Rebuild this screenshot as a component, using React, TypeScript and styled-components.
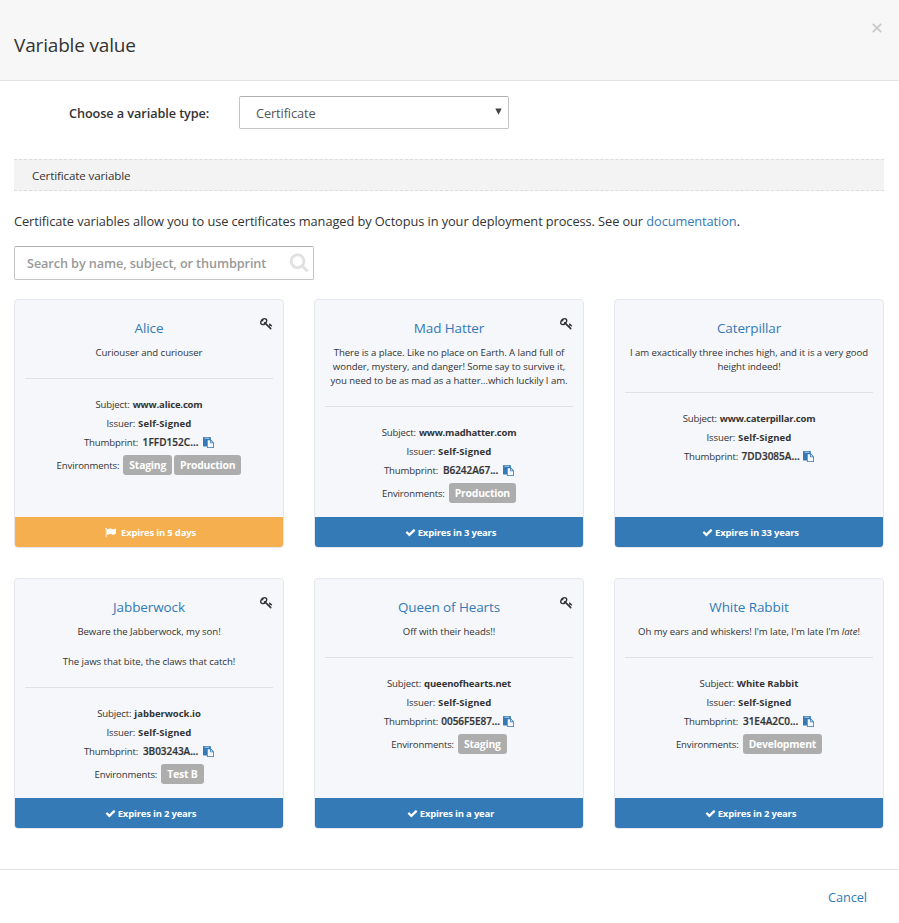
import React from "react";
import styled, { createGlobalStyle } from "styled-components";

const GlobalStyle = createGlobalStyle`
  * { box-sizing: border-box; }
  body {
    margin: 0;
    background: #fff;
    color: #333;
    font-family: "Open Sans", "Noto Sans", sans-serif;
    font-size: 12.8px;
  }
`;

const Dialog = styled.div`
  width: 899px;
  height: 923px;
  display: flex;
  flex-direction: column;
  overflow: hidden;
`;

const Header = styled.header`
  height: 81px;
  padding: 0 16px 0 14px;
  display: flex;
  justify-content: space-between;
  background: #f7f7f7;
  border-bottom: 1px solid #e2e2e2;
`;

const Heading = styled.h1`
  margin: 31px 0 0;
  font-size: 19px;
  font-weight: 400;
  line-height: 28px;
  letter-spacing: -0.17px;
`;

const CloseButton = styled.button`
  width: 12px;
  height: 12px;
  margin-top: 22px;
  padding: 0;
  border: 0;
  background: none;
  display: flex;
  align-items: center;
  justify-content: center;
`;

const Body = styled.main`
  flex: 1;
  padding: 15px 15px 0 14px;
`;

const FormRow = styled.div`
  display: flex;
  align-items: center;
  height: 33px;
`;

const Label = styled.label`
  width: 225px;
  padding: 1px 0 0 55px;
  font-weight: 600;
  font-size: 12.7px;
  letter-spacing: -0.08px;
`;

const Select = styled.button`
  width: 270px;
  height: 33px;
  padding: 0 6px 0 16px;
  display: flex;
  align-items: center;
  justify-content: space-between;
  border: 1px solid #c4c4c4;
  border-top-color: #b0b0b0;
  border-radius: 2px;
  background: #fff;
  color: #555;
  font: inherit;
  letter-spacing: -0.12px;
`;

const Caret = styled.svg`
  width: 7px;
  height: 7px;
  margin-top: -3px;
`;

const Banner = styled.div`
  height: 32px;
  margin-top: 30px;
  padding-left: 18px;
  border: dashed #dcdcdc;
  border-width: 1px 0;
  background: #f3f3f3;
  font-size: 11.6px;
  line-height: 32px;
  letter-spacing: -0.13px;
`;

const Intro = styled.p`
  margin: 20px 0 0;
  line-height: 20px;
  letter-spacing: -0.08px;
  white-space: nowrap;
`;

const Link = styled.a`
  color: #337ab7;
  text-decoration: none;
`;

const SearchBox = styled.div`
  width: 300px;
  height: 34px;
  margin-top: 15px;
  padding: 0 4px 2px 12px;
  display: flex;
  align-items: center;
  justify-content: space-between;
  border: 1px solid #c4c4c4;
  border-top-color: #b0b0b0;
  border-radius: 2px;
`;

const SearchInput = styled.input`
  flex: 1;
  min-width: 0;
  padding: 1px 0 0;
  border: 0;
  outline: 0;
  font: 600 12.7px "Open Sans", sans-serif;
  letter-spacing: -0.1px;
  &::placeholder { color: #999; opacity: 1; }
`;

const Icon = styled.svg<{ $size: number; $color?: string }>`
  width: ${(p) => p.$size}px;
  height: ${(p) => p.$size}px;
  fill: ${(p) => p.$color ?? "currentColor"};
  flex: none;
  display: block;
`;

const CardGrid = styled.section`
  margin-top: 19px;
  display: grid;
  grid-template-columns: repeat(3, 270px);
  grid-template-rows: 249px 251px;
  gap: 30px;
`;

const CardShell = styled.article`
  position: relative;
  display: flex;
  flex-direction: column;
  overflow: hidden;
  border: 1px solid #e4e8ee;
  border-radius: 4px;
  background: #f5f7fb;
  text-align: center;
  font-size: 9.6px;
`;

const CardMain = styled.div`
  flex: 1;
  padding: 17px 10px 0;
`;

const KeyBadge = styled.span`
  position: absolute;
  top: 17px;
  right: 10px;
`;

const CardTitle = styled.h2`
  margin: 0 0 7px;
  color: #337ab7;
  font-size: 13.5px;
  font-weight: 400;
  line-height: 22px;
  letter-spacing: -0.11px;
`;

const Description = styled.div`
  padding-bottom: 18px;
  border-bottom: 1px solid #dfe1e4;
  line-height: 14px;
  letter-spacing: -0.06px;
  white-space: nowrap;
`;

const Paragraph = styled.p`
  margin: 0;
  & + & { margin-top: 16px; }
`;

const Details = styled.div`
  padding-top: 16px;
`;

const DetailRow = styled.div`
  height: 19px;
  display: flex;
  align-items: center;
  justify-content: center;
`;

const EnvironmentRow = styled(DetailRow)`
  height: 20px;
  margin-top: 3px;
  gap: 2px;
`;

const DetailLabel = styled.span<{ $gap?: number }>`
  margin-right: ${(p) => p.$gap ?? 3}px;
  letter-spacing: -0.15px;
`;

const Value = styled.strong<{ $ls: number }>`
  font-size: 9.5px;
  font-weight: 700;
  letter-spacing: ${(p) => p.$ls}px;
`;

const Thumbprint = styled(Value)`
  width: 61px;
  margin: -2px 2px 0 2px;
  font-size: 10px;
  font-weight: 600;
  white-space: nowrap;
  -webkit-text-stroke: 0.2px currentColor;
`;

const Tag = styled.span`
  height: 20px;
  padding: 0 6px;
  border-radius: 3px;
  background: #adadad;
  color: #fff;
  font-size: 10.4px;
  font-weight: 700;
  line-height: 20px;
  letter-spacing: -0.21px;
`;

const Expiry = styled.footer<{ $warning?: boolean }>`
  height: 30px;
  padding-left: 3px;
  display: flex;
  align-items: center;
  justify-content: center;
  gap: ${(p) => (p.$warning ? 5 : 2)}px;
  background: ${(p) => (p.$warning ? "#f5af4e" : "#337ab7")};
  color: #fff;
  font-size: 9.5px;
  font-weight: 700;
  letter-spacing: -0.2px;
`;

const Footer = styled.footer`
  height: 54px;
  padding: 0 32px 0 0;
  display: flex;
  align-items: center;
  justify-content: flex-end;
  border-top: 1px solid #e2e2e2;
  letter-spacing: -0.1px;
`;

const paths = {
  search:
    "M1216 832q0-185-131.500-316.500t-316.500-131.500-316.500 131.500-131.500 316.500 131.500 316.500 316.500 131.500 316.500-131.500 131.500-316.500zm512 832q0 52-38 90t-90 38q-54 0-90-38l-343-342q-179 124-399 124-143 0-273.500-55.500t-225-150-150-225-55.500-273.500 55.500-273.500 150-225 225-150 273.500-55.500 273.500 55.500 225 150 150 225 55.500 273.500q0 220-124 399l343 343q37 37 37 90z",
  key: "M832 512q0-80-56-136t-136-56-136 56-56 136q0 42 19 83-41-19-83-19-80 0-136 56t-56 136 56 136 136 56 136-56 56-136q0-42-19-83 41 19 83 19 80 0 136-56t56-136zm851 704q0 17-49 66t-66 49q-9 0-28.500-16t-36.500-33-38.500-40-24.500-26l-96 96 220 220q28 28 28 68 0 42-39 81t-81 39q-40 0-68-28l-671-671q-176 131-365 131-163 0-265.500-102.500t-102.500-265.500q0-160 95-313t248-248 313-95q163 0 265.500 102.500t102.500 265.500q0 189-131 365l355 355 96-96q-3-3-26-24.500t-40-38.500-33-36.500-16-28.500q0-17 49-66t66-49q13 0 23 10 6 6 46 44.500t82 79.500 86.500 86 73 78 28.500 41z",
  paste:
    "M768 1664h896v-640h-416q-40 0-68-28t-28-68v-416h-384v1152zm256-1440v-64q0-13-9.500-22.500t-22.500-9.500h-704q-13 0-22.500 9.500t-9.500 22.500v64q0 13 9.500 22.500t22.500 9.500h704q13 0 22.500-9.500t9.500-22.500zm256 672h299l-299-299v299zm512 128v672q0 40-28 68t-68 28h-960q-40 0-68-28t-28-68v-160h-544q-40 0-68-28t-28-68v-1344q0-40 28-68t68-28h1088q40 0 68 28t28 68v328q21 13 36 28l408 408q28 28 48 76t20 88z",
  check:
    "M1671 566q0 40-28 68l-724 724-136 136q-28 28-68 28t-68-28l-136-136-362-362q-28-28-28-68t28-68l136-136q28-28 68-28t68 28l294 295 656-657q28-28 68-28t68 28l136 136q28 28 28 68z",
  flag: "M320 256q0 72-64 110v1266q0 13-9.500 22.500t-22.500 9.500h-64q-13 0-22.500-9.500t-9.500-22.500v-1266q-64-38-64-110 0-53 37.500-90.500t90.500-37.500 90.500 37.500 37.500 90.500zm1472 64v763q0 25-12.500 38.500t-39.500 27.500q-215 116-369 116-61 0-123.500-22t-108.500-48-115.500-48-142.500-22q-192 0-464 146-17 9-33 9-26 0-45-19t-19-45v-742q0-32 31-55 21-14 79-43 236-120 421-120 107 0 200 29t219 88q38 19 88 19 54 0 117.500-21t110-47 88-47 54.500-21q26 0 45 19t19 45z",
};

function Glyph({ name, size, color }: { name: keyof typeof paths; size: number; color?: string }) {
  return (
    <Icon $size={size} $color={color} viewBox="0 0 1792 1792">
      <path d={paths[name]} />
    </Icon>
  );
}

type Certificate = {
  name: string;
  hasKey?: boolean;
  description: React.ReactNode;
  subject: string;
  subjectSpacing: number;
  thumbprint: string;
  thumbSpacing: number;
  environments: string[];
  expires: string;
  warning?: boolean;
};

const certificates: Certificate[] = [
  {
    name: "Alice", hasKey: true,
    description: <Paragraph>Curiouser and curiouser</Paragraph>,
    subject: "www.alice.com", subjectSpacing: -0.16,
    thumbprint: "1FFD152C...", thumbSpacing: 0.05,
    environments: ["Staging", "Production"], expires: "Expires in 5 days", warning: true,
  },
  {
    name: "Mad Hatter", hasKey: true,
    description: (
      <Paragraph>
        There is a place. Like no place on Earth. A land full of<br />
        wonder, mystery, and danger! Some say to survive it,<br />
        you need to be as mad as a hatter...which luckily I am.
      </Paragraph>
    ),
    subject: "www.madhatter.com", subjectSpacing: -0.22,
    thumbprint: "B6242A67...", thumbSpacing: -0.03,
    environments: ["Production"], expires: "Expires in 3 years",
  },
  {
    name: "Caterpillar",
    description: (
      <Paragraph>
        I am exactically three inches high, and it is a very good<br />height indeed!
      </Paragraph>
    ),
    subject: "www.caterpillar.com", subjectSpacing: -0.2,
    thumbprint: "7DD3085A...", thumbSpacing: 0,
    environments: [], expires: "Expires in 33 years",
  },
  {
    name: "Jabberwock", hasKey: true,
    description: (
      <>
        <Paragraph>Beware the Jabberwock, my son!</Paragraph>
        <Paragraph>The jaws that bite, the claws that catch!</Paragraph>
      </>
    ),
    subject: "jabberwock.io", subjectSpacing: -0.03,
    thumbprint: "3B03243A...", thumbSpacing: -0.03,
    environments: ["Test B"], expires: "Expires in 2 years",
  },
  {
    name: "Queen of Hearts", hasKey: true,
    description: <Paragraph>Off with their heads!!</Paragraph>,
    subject: "queenofhearts.net", subjectSpacing: -0.1,
    thumbprint: "0056F5E87...", thumbSpacing: -0.05,
    environments: ["Staging"], expires: "Expires in a year",
  },
  {
    name: "White Rabbit",
    description: <Paragraph>Oh my ears and whiskers! I'm late, I'm late I'm <em>late</em>!</Paragraph>,
    subject: "White Rabbit", subjectSpacing: 0,
    thumbprint: "31E4A2C0...", thumbSpacing: 0,
    environments: ["Development"], expires: "Expires in 2 years",
  },
];

function CertificateCard({ cert }: { cert: Certificate }) {
  return (
    <CardShell>
      {cert.hasKey && (
        <KeyBadge><Glyph name="key" size={13} color="#333" /></KeyBadge>
      )}
      <CardMain>
        <CardTitle>{cert.name}</CardTitle>
        <Description>{cert.description}</Description>
        <Details>
          <DetailRow>
            <DetailLabel>Subject:</DetailLabel>
            <Value $ls={cert.subjectSpacing}>{cert.subject}</Value>
          </DetailRow>
          <DetailRow>
            <DetailLabel>Issuer:</DetailLabel>
            <Value $ls={0.14}>Self-Signed</Value>
          </DetailRow>
          <DetailRow>
            <DetailLabel $gap={0}>Thumbprint:</DetailLabel>
            <Thumbprint $ls={cert.thumbSpacing}>{cert.thumbprint}</Thumbprint>
            <Glyph name="paste" size={11} color="#337ab7" />
          </DetailRow>
          {cert.environments.length > 0 && (
            <EnvironmentRow>
              <DetailLabel $gap={2}>Environments:</DetailLabel>
              {cert.environments.map((env) => <Tag key={env}>{env}</Tag>)}
            </EnvironmentRow>
          )}
        </Details>
      </CardMain>
      <Expiry $warning={cert.warning}>
        <Glyph name={cert.warning ? "flag" : "check"} size={11} />
        {cert.expires}
      </Expiry>
    </CardShell>
  );
}

export default function App() {
  return (
    <Dialog>
      <GlobalStyle />
      <Header>
        <Heading>Variable value</Heading>
        <CloseButton aria-label="Close">
          <svg width="10" height="10" viewBox="0 0 10 10" stroke="#c8c8c8" strokeWidth="1.8">
            <path d="M.8 .8l8.400 8.400M9.200 .8L.8 9.200" />
          </svg>
        </CloseButton>
      </Header>
      <Body>
        <FormRow>
          <Label>Choose a variable type:</Label>
          <Select>
            Certificate
            <Caret viewBox="0 0 7 7"><path d="M.3 .5h6.400L3.500 6.700z" fill="#444" /></Caret>
          </Select>
        </FormRow>
        <Banner>Certificate variable</Banner>
        <Intro>
          Certificate variables allow you to use certificates managed by Octopus in your deployment
          process. See our <Link>documentation</Link>.
        </Intro>
        <SearchBox>
          <SearchInput placeholder="Search by name, subject, or thumbprint" />
          <Glyph name="search" size={20} color="#e1e1e1" />
        </SearchBox>
        <CardGrid>
          {certificates.map((cert) => <CertificateCard key={cert.name} cert={cert} />)}
        </CardGrid>
      </Body>
      <Footer><Link>Cancel</Link></Footer>
    </Dialog>
  );
}
